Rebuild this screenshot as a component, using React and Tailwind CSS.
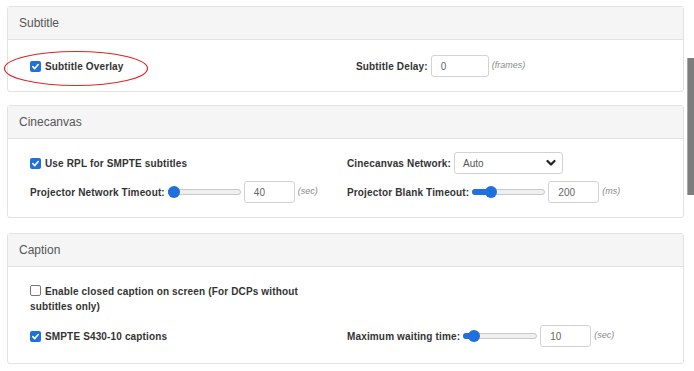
import React from 'react';

const font = { fontFamily: '"Liberation Sans", Arial, sans-serif' };

const Check = ({ on }) =>
  on ? (
    <span className="inline-flex w-[11px] h-[11px] rounded-[2px] bg-[#1f6fde] items-center justify-center shrink-0">
      <svg width="9" height="9" viewBox="0 0 10 10">
        <path d="M2 5.2 L4.2 7.3 L8 2.8" fill="none" stroke="#fff" strokeWidth="1.8" strokeLinecap="round" strokeLinejoin="round" />
      </svg>
    </span>
  ) : (
    <span className="inline-block w-[11px] h-[11px] rounded-[2px] border border-[#767676] bg-white shrink-0 align-[-1px]" />
  );

const Slider = ({ width, pos }) => (
  <div className="relative h-[12px] shrink-0" style={{ width }}>
    <div className="absolute left-0 right-0 top-[3px] h-[6px] rounded-full border border-[#c9c9c9] bg-[#efefef]" />
    <div className="absolute left-0 top-[3px] h-[6px] rounded-full bg-[#1f6fde]" style={{ width: pos + 2 }} />
    <div className="absolute top-0 w-[12px] h-[12px] rounded-full bg-[#1f6fde]" style={{ left: pos - 6 }} />
  </div>
);

const Input = ({ value, w = 'w-[51px]' }) => (
  <div className={`${w} h-[22px] border border-[#d2d2d2] rounded-[3px] bg-white flex items-center pl-[9px] text-[10px] text-[#666] shrink-0`}>
    {value}
  </div>
);

const Unit = ({ children }) => <span className="text-[9px] italic text-[#8a8a8a]">{children}</span>;

const Label = ({ children }) => (
  <span className="text-[10px] font-bold text-[#333] tracking-[0.15px] whitespace-nowrap">{children}</span>
);

const Panel = ({ title, children, body }) => (
  <div className="border border-[#e2e2e2] rounded-[3px] bg-white">
    <div className="h-[33px] bg-[#f5f5f5] border-b border-[#e2e2e2] flex items-center pl-[11px] text-[12px] text-[#555]">
      {title}
    </div>
    <div className={body}>{children}</div>
  </div>
);

export default function App() {
  return (
    <div className="relative w-[694px] h-[371px] bg-white overflow-hidden" style={font}>
      <div className="pl-[7px] pr-[10px] pt-[6px] flex flex-col">
        <Panel title="Subtitle" body="pt-[15px] pb-[14px] pl-[22px]">
          <div className="grid grid-cols-[300px_1fr] gap-x-[17px] items-center h-[22px]">
            <div className="flex items-center gap-[4px]">
              <Check on />
              <Label>Subtitle Overlay</Label>
            </div>
            <div className="flex items-center pl-[9px] gap-[3px]">
              <Label>Subtitle Delay:</Label>
              <Input value="0" w="w-[58px]" />
              <Unit>(frames)</Unit>
            </div>
          </div>
        </Panel>

        <div className="h-[13px]" />

        <Panel title="Cinecanvas" body="pt-[13px] pb-[14px] pl-[22px] flex flex-col gap-[7px]">
          <div className="grid grid-cols-[300px_1fr] gap-x-[17px] items-center h-[22px]">
            <div className="flex items-center gap-[4px]">
              <Check on />
              <Label>Use RPL for SMPTE subtitles</Label>
            </div>
            <div className="flex items-center gap-[3px]">
              <Label>Cinecanvas Network:</Label>
              <div className="w-[109px] h-[22px] border border-[#d2d2d2] rounded-[3px] bg-white flex items-center justify-between pl-[8px] pr-[6px] text-[10px] text-[#555]">
                <span>Auto</span>
                <svg width="10" height="8" viewBox="0 0 10 8">
                  <path d="M1.5 2 L5 5.5 L8.5 2" fill="none" stroke="#222" strokeWidth="2.2" strokeLinecap="round" strokeLinejoin="round" />
                </svg>
              </div>
            </div>
          </div>
          <div className="grid grid-cols-[300px_1fr] gap-x-[17px] items-center h-[22px]">
            <div className="flex items-center gap-[3px]">
              <Label>Projector Network Timeout:</Label>
              <Slider width={73} pos={6} />
              <Input value="40" />
              <Unit>(sec)</Unit>
            </div>
            <div className="flex items-center gap-[3px]">
              <Label>Projector Blank Timeout:</Label>
              <Slider width={73} pos={19} />
              <Input value="200" />
              <Unit>(ms)</Unit>
            </div>
          </div>
        </Panel>

        <div className="h-[15px]" />

        <Panel title="Caption" body="pt-[17px] pb-[16px] pl-[22px] flex flex-col gap-[11px]">
          <div className="grid grid-cols-[300px_1fr] gap-x-[17px]">
            <div className="text-[10px] font-bold text-[#333] tracking-[0.15px] leading-[15px] pr-[4px]">
              <span className="inline-flex align-[-1px] mr-[4px]"><Check /></span>
              Enable closed caption on screen (For DCPs without subtitles only)
            </div>
            <div />
          </div>
          <div className="grid grid-cols-[300px_1fr] gap-x-[17px] items-center h-[22px]">
            <div className="flex items-center gap-[4px]">
              <Check on />
              <Label>SMPTE S430-10 captions</Label>
            </div>
            <div className="flex items-center gap-[3px]">
              <Label>Maximum waiting time:</Label>
              <Slider width={74} pos={11} />
              <Input value="10" />
              <Unit>(sec)</Unit>
            </div>
          </div>
        </Panel>
      </div>

      {/* red annotation ellipse */}
      <svg className="absolute left-[3px] top-[50px]" width="146" height="38" viewBox="0 0 146 38">
        <ellipse cx="73" cy="18.5" rx="71.5" ry="17" fill="none" stroke="#d9262a" strokeWidth="1.2" />
      </svg>

      {/* window scrollbar thumb */}
      <div className="absolute left-[687px] top-[58px] w-[7px] h-[137px] bg-[#7d7d7d] border-l border-[#a8a8a8]" />
    </div>
  );
}
